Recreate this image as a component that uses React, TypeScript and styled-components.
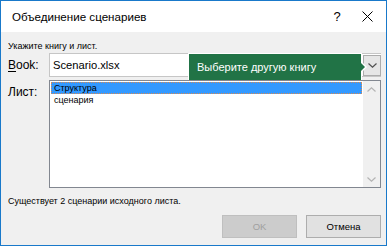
import React from 'react'
import styled, { createGlobalStyle } from 'styled-components'

const GlobalStyle = createGlobalStyle`
  html, body {
    margin: 0;
    padding: 0;
    background: #ffffff;
  }
  body {
    font-family: "Liberation Sans", Arial, sans-serif;
    color: #000000;
  }
`

const Window = styled.div`
  width: 387px;
  height: 246px;
  box-sizing: border-box;
  border: 1px solid #1979ca;
  display: flex;
  flex-direction: column;
  background: #f0f0f0;
`

const TitleBar = styled.div`
  height: 31px;
  flex: none;
  background: #ffffff;
  display: flex;
  align-items: center;
  padding-left: 11px;
  padding-right: 4px;
  font-size: 11.6px;
  line-height: 14px;
`

const Title = styled.div`
  flex: 1;
`

const TitleButton = styled.div`
  width: 30px;
  height: 30px;
  display: flex;
  align-items: center;
  justify-content: center;
  font-size: 13px;
`

const Body = styled.div`
  flex: 1;
  display: flex;
  flex-direction: column;
  padding: 9px 5px 0 7px;
`

const SmallText = styled.div<{ $top?: number }>`
  font-size: 9px;
  line-height: 11px;
  margin-top: ${(p) => p.$top || 0}px;
`

const FieldRow = styled.div<{ $top?: number; $align?: string }>`
  position: relative;
  display: flex;
  align-items: ${(p) => p.$align || 'center'};
  margin-top: ${(p) => p.$top || 0}px;
`

const Label = styled.div<{ $padTop?: number }>`
  width: 41px;
  flex: none;
  font-size: 12px;
  line-height: 14px;
  padding-top: ${(p) => p.$padTop || 0}px;

  u {
    text-decoration-thickness: 1px;
    text-underline-offset: 2px;
  }
`

const Combo = styled.div`
  flex: 1;
  height: 24px;
  box-sizing: border-box;
  display: flex;
  align-items: stretch;
  background: #ffffff;
  border: 1px solid #c6c6c6;
  border-right: none;
`

const ComboValue = styled.div`
  flex: 1;
  display: flex;
  align-items: center;
  padding-left: 3px;
  font-size: 11.2px;
`

const DropButton = styled.div`
  width: 18px;
  box-sizing: border-box;
  display: flex;
  align-items: center;
  justify-content: center;
  margin-top: 1px;
  background: #e6e6e6;
  border: 1px solid #acacac;
`

const Tooltip = styled.div`
  position: absolute;
  left: 180px;
  top: 0;
  width: 174px;
  height: 28px;
  box-sizing: border-box;
  display: flex;
  align-items: center;
  padding-left: 8px;
  background: #217346;
  border: 1px solid #ffffff;
  color: #ffffff;
  font-size: 11px;

  &::before,
  &::after {
    content: '';
    position: absolute;
    top: 50%;
    width: 0;
    height: 0;
    border-style: solid;
    border-color: transparent;
  }
  &::before {
    left: 100%;
    margin-top: -6px;
    border-width: 6px 0 6px 6px;
    border-left-color: #ffffff;
  }
  &::after {
    left: calc(100% - 1px);
    margin-top: -5px;
    border-width: 5px 0 5px 5px;
    border-left-color: #217346;
  }
`

const ListBox = styled.div`
  flex: 1;
  height: 108px;
  box-sizing: border-box;
  display: flex;
  background: #ffffff;
  border: 1px solid #828790;
`

const Items = styled.div`
  flex: 1;
  padding: 1px;
`

const Item = styled.div<{ $selected?: boolean }>`
  height: 12px;
  box-sizing: border-box;
  padding-left: 2px;
  font-size: 9px;
  line-height: 10px;
  border: 1px dotted ${(p) => (p.$selected ? '#d88a52' : 'transparent')};
  background: ${(p) => (p.$selected ? '#3399ff' : 'transparent')};
`

const ScrollBar = styled.div`
  width: 17px;
  flex: none;
  display: flex;
  flex-direction: column;
  justify-content: space-between;
  align-items: center;
  padding: 6px 0 5px;
  background: #f0f0f0;
`

const Buttons = styled.div`
  display: flex;
  justify-content: flex-end;
  gap: 9px;
  margin-top: 8px;
`

const Button = styled.div<{ $disabled?: boolean }>`
  width: 75px;
  height: 23px;
  box-sizing: border-box;
  display: flex;
  align-items: center;
  justify-content: center;
  font-size: 9.5px;
  background: ${(p) => (p.$disabled ? '#cccccc' : '#e1e1e1')};
  border: 1px solid ${(p) => (p.$disabled ? '#bfbfbf' : '#adadad')};
  color: ${(p) => (p.$disabled ? '#a0a0a0' : '#000000')};
`

const Chevron = ({ up, color }: { up?: boolean; color: string }) => (
  <svg width="9" height="5" viewBox="0 0 9 5">
    <path
      d={up ? 'M0.5 4.5 L4.5 0.8 L8.5 4.5' : 'M0.5 0.5 L4.5 4.2 L8.5 0.5'}
      fill="none"
      stroke={color}
      strokeWidth="1.2"
    />
  </svg>
)

const App = () => {
  return (
    <>
      <GlobalStyle />
      <Window>
        <TitleBar>
          <Title>Объединение сценариев</Title>
          <TitleButton>?</TitleButton>
          <TitleButton>
            <svg width="11" height="11" viewBox="0 0 11 11">
              <path d="M0.5 0.5 L10.5 10.5 M10.5 0.5 L0.5 10.5" stroke="#000" strokeWidth="1" />
            </svg>
          </TitleButton>
        </TitleBar>
        <Body>
          <SmallText>Укажите книгу и лист.</SmallText>
          <FieldRow $top={1}>
            <Label>
              <u>B</u>ook:
            </Label>
            <Combo>
              <ComboValue>Scenario.xlsx</ComboValue>
              <DropButton>
                <Chevron color="#505050" />
              </DropButton>
            </Combo>
            <Tooltip>Выберите другую книгу</Tooltip>
          </FieldRow>
          <FieldRow $top={3} $align="flex-start">
            <Label $padTop={5}>Лист:</Label>
            <ListBox>
              <Items>
                <Item $selected>Структура</Item>
                <Item>сценария</Item>
              </Items>
              <ScrollBar>
                <Chevron up color="#b4b4b4" />
                <Chevron color="#b4b4b4" />
              </ScrollBar>
            </ListBox>
          </FieldRow>
          <SmallText $top={8}>Существует 2 сценарии исходного листа.</SmallText>
          <Buttons>
            <Button $disabled>OK</Button>
            <Button>Отмена</Button>
          </Buttons>
        </Body>
      </Window>
    </>
  )
}

export default App
